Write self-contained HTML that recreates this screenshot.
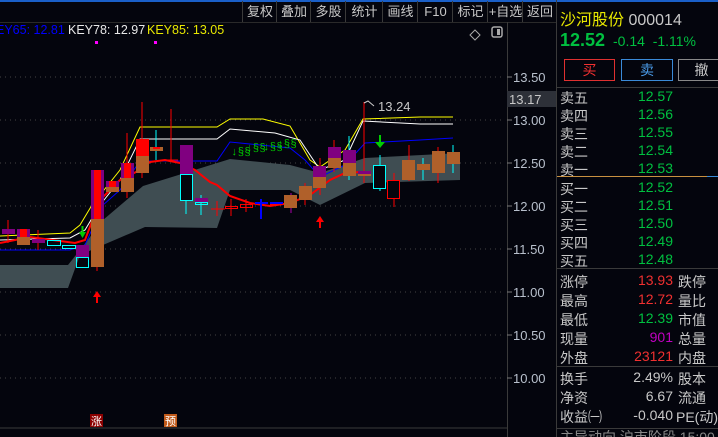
<!DOCTYPE html>
<html style="overflow:hidden;height:437px"><head><meta charset="utf-8"><style>
body{margin:0;width:718px;height:437px;background:#04050d;overflow:hidden;font-family:"Liberation Sans","Noto Sans CJK SC",sans-serif;position:relative}
.a{position:absolute;white-space:nowrap}
.btn{position:absolute;top:1px;height:21px;line-height:21px;color:#c8c8c8;font-size:13px;text-align:center;border-left:1px solid #3a3a3a}
.r{position:absolute;left:560px;font-size:14px;color:#c8c8c8}
.v{position:absolute;font-size:14px;text-align:right;width:80px}
</style></head><body>
<div class="a" style="left:0;top:0;width:718px;height:2px;background:#1a5fc8"></div>
<div class="btn" style="left:242px;width:34px">复权</div>
<div class="btn" style="left:276px;width:34px">叠加</div>
<div class="btn" style="left:310px;width:35px">多股</div>
<div class="btn" style="left:345px;width:37px">统计</div>
<div class="btn" style="left:382px;width:35px">画线</div>
<div class="btn" style="left:417px;width:35px">F10</div>
<div class="btn" style="left:452px;width:35px">标记</div>
<div class="btn" style="left:487px;width:35px">+自选</div>
<div class="btn" style="left:522px;width:34px">返回</div>
<div class="a" style="left:0;top:22px;width:556px;height:1px;background:#2a2a2a"></div>
<div class="a" style="left:556px;top:0;width:1px;height:437px;background:#3a3a3a"></div>
<div class="a" style="left:507px;top:22px;width:1px;height:415px;background:#3a3a3a"></div>
<div class="a" style="left:-4px;top:23px;font-size:12.5px;color:#0000ff">EY65: 12.81</div>
<div class="a" style="left:68px;top:23px;font-size:12.5px;color:#e8e8e8">KEY78: 12.97</div>
<div class="a" style="left:147px;top:23px;font-size:12.5px;color:#e8e800">KEY85: 13.05</div>
<div class="a" style="left:95px;top:41px;width:3px;height:3px;background:#f0f"></div>
<div class="a" style="left:154px;top:41px;width:3px;height:3px;background:#f0f"></div>
<svg class="a" style="left:0;top:0" width="556" height="437">
<g stroke="#444" stroke-dasharray="1,4">
<line x1="0" y1="77" x2="505" y2="77"/><line x1="0" y1="120" x2="505" y2="120"/><line x1="0" y1="163" x2="505" y2="163"/><line x1="0" y1="206" x2="505" y2="206"/><line x1="0" y1="249" x2="505" y2="249"/><line x1="0" y1="292" x2="505" y2="292"/><line x1="0" y1="335" x2="505" y2="335"/><line x1="0" y1="378" x2="505" y2="378"/></g>
<g stroke="#777"><line x1="507" y1="77" x2="512" y2="77"/><line x1="507" y1="120" x2="512" y2="120"/><line x1="507" y1="163" x2="512" y2="163"/><line x1="507" y1="206" x2="512" y2="206"/><line x1="507" y1="249" x2="512" y2="249"/><line x1="507" y1="292" x2="512" y2="292"/><line x1="507" y1="335" x2="512" y2="335"/><line x1="507" y1="378" x2="512" y2="378"/></g>
<line x1="0" y1="428" x2="507" y2="428" stroke="#3a3a3a"/>
<g font-size="13" fill="#b8c0cc" font-family="Liberation Sans"><text x="513" y="82">13.50</text><text x="513" y="125">13.00</text><text x="513" y="168">12.50</text><text x="513" y="211">12.00</text><text x="513" y="254">11.50</text><text x="513" y="297">11.00</text><text x="513" y="340">10.50</text><text x="513" y="383">10.00</text></g>
<rect x="507" y="91" width="49" height="16" fill="#2d3038"/><text x="509" y="104" font-size="13" fill="#c8c8c8">13.17</text>
<path d="M475 30 l5 5 -5 5 -5 -5z" fill="none" stroke="#aaa"/><rect x="492" y="27" width="10" height="10" rx="2" fill="none" stroke="#aaa" stroke-width="1.5"/><rect x="497" y="29" width="3" height="6" fill="#aaa"/>
<polygon fill="#3f4d52" points="0,265 68,265 80,250 103,220 143,186 230,159 290,165 320,173 365,158 460,153 460,180 365,183 320,205 290,190 230,190 217,228 145,227 103,245 80,255 68,288 0,288"/>
<polyline fill="none" stroke="#ffff00" points="0,236 70,233 80,225 92,205 120,170 140,127 217,127 230,119 263,119 290,126 310,160 320,167 345,150 363,119 420,117 453,117"/>
<polyline fill="none" stroke="#fff" points="0,240 70,238 85,230 100,205 120,180 140,139 217,139 230,129 275,133 300,140 320,170 345,160 363,121 420,124 453,124"/>
<polyline fill="none" stroke="#0000ff" points="0,250 70,250 85,245 103,205 120,190 140,161 217,161 230,142 290,148 305,160 320,177 345,165 365,143 420,140 453,138"/>
<polyline fill="none" stroke="#ff0000" stroke-width="2" points="0,243 30,237 60,241 75,243 85,240 100,200 120,180 140,170 150,162 165,160 180,163 195,170 210,182 217,185 230,196 250,203 270,206 290,203 310,195 330,180 345,173 360,172"/>
<g stroke-width="1">
<line x1="8" y1="220" x2="8" y2="243" stroke="#f00"/><rect x="2" y="229" width="13" height="5" fill="#800080"/>
<rect x="17" y="229" width="13" height="8" fill="#800080"/><rect x="17" y="237" width="13" height="8" fill="#b0602a"/><rect x="20" y="229" width="7" height="8" fill="#f00"/>
<line x1="38" y1="230" x2="38" y2="250" stroke="#f00"/><rect x="32" y="239" width="13" height="4" fill="#800080"/>
<rect x="47.5" y="240.5" width="13" height="5" fill="none" stroke="#0ff"/>
<rect x="62.5" y="245.5" width="13" height="3" fill="none" stroke="#0ff"/>
<rect x="76" y="245" width="13" height="12" fill="#800080"/><rect x="76.5" y="257.5" width="12" height="10" fill="none" stroke="#0ff"/>
<polygon points="79,232 86,232 82.5,238" fill="#0c0"/><line x1="82.5" y1="226" x2="82.5" y2="233" stroke="#0c0" stroke-width="2"/>
<line x1="97" y1="170" x2="97" y2="271" stroke="#f00"/><rect x="91" y="170" width="13" height="49" fill="#800080"/><rect x="94" y="170" width="7" height="49" fill="#f00"/><rect x="91" y="219" width="13" height="48" fill="#b0602a"/>
<rect x="106" y="181" width="13" height="6" fill="#800080"/><rect x="109" y="181" width="7" height="6" fill="#f00"/><rect x="106" y="187" width="13" height="5" fill="#b0602a"/>
<line x1="127" y1="133" x2="127" y2="198" stroke="#f00"/><rect x="121" y="163" width="13" height="15" fill="#800080"/><rect x="124" y="163" width="7" height="15" fill="#f00"/><rect x="121" y="178" width="13" height="14" fill="#b0602a"/>
<line x1="142" y1="102" x2="142" y2="178" stroke="#f00"/><rect x="136" y="139" width="13" height="17" fill="#f00"/><rect x="136" y="156" width="13" height="17" fill="#b0602a"/>
<line x1="156" y1="130" x2="156" y2="160" stroke="#0ff"/><rect x="150" y="147" width="13" height="4" fill="#b0602a"/><rect x="153" y="147" width="7" height="2" fill="#f00"/>
<line x1="171" y1="109" x2="171" y2="160" stroke="#f00"/><line x1="165" y1="160" x2="178" y2="160" stroke="#f00"/>
<line x1="186" y1="145" x2="186" y2="214" stroke="#0ff"/><rect x="180" y="145" width="13" height="29" fill="#800080"/><rect x="180.5" y="174.5" width="12" height="26" fill="#04050d" stroke="#0ff"/>
<line x1="201" y1="195" x2="201" y2="215" stroke="#0ff"/><rect x="195" y="198" width="13" height="4" fill="#800080"/><rect x="195.5" y="202.5" width="12" height="2" fill="none" stroke="#0ff"/>
<line x1="217" y1="201" x2="217" y2="216" stroke="#f00"/><line x1="211" y1="209" x2="225" y2="209" stroke="#f00"/>
<line x1="231" y1="199" x2="231" y2="216" stroke="#f00"/><rect x="225.5" y="206.5" width="12" height="2" fill="none" stroke="#f00"/>
<line x1="246" y1="199" x2="246" y2="212" stroke="#f00"/><rect x="240.5" y="204.5" width="12" height="3" fill="none" stroke="#f00"/>
<line x1="261" y1="199" x2="261" y2="219" stroke="#00f" stroke-width="2"/><line x1="255" y1="203" x2="268" y2="203" stroke="#00f" stroke-width="2"/>
<rect x="270" y="202" width="13" height="3" fill="#00f"/><rect x="270" y="204" width="13" height="1" fill="#f00"/>
<line x1="291" y1="193" x2="291" y2="213" stroke="#a0a"/><rect x="284" y="195" width="13" height="13" fill="#b0602a"/>
<line x1="305" y1="183" x2="305" y2="205" stroke="#f00"/><rect x="299" y="186" width="13" height="14" fill="#b0602a"/>
<line x1="320" y1="158" x2="320" y2="195" stroke="#f00"/><rect x="313" y="166" width="13" height="11" fill="#800080"/><rect x="313" y="177" width="13" height="11" fill="#b0602a"/>
<line x1="334" y1="140" x2="334" y2="172" stroke="#f00"/><rect x="328" y="147" width="13" height="11" fill="#800080"/><rect x="328" y="158" width="13" height="10" fill="#b0602a"/>
<line x1="349" y1="136" x2="349" y2="180" stroke="#0ff"/><rect x="343" y="150" width="13" height="13" fill="#800080"/><rect x="343" y="163" width="13" height="13" fill="#b0602a"/>
<line x1="364" y1="102" x2="364" y2="183" stroke="#f00"/><rect x="358" y="171" width="13" height="3" fill="#800080"/><rect x="358" y="174" width="13" height="2" fill="#b0602a"/>
<line x1="380" y1="155" x2="380" y2="191" stroke="#0ff"/><rect x="373.5" y="165.5" width="12" height="23" fill="#04050d" stroke="#0ff"/>
<line x1="394" y1="173" x2="394" y2="207" stroke="#f00"/><rect x="387.5" y="180.5" width="12" height="18" fill="#04050d" stroke="#f00"/>
<line x1="409" y1="145" x2="409" y2="181" stroke="#f00"/><rect x="402" y="160" width="13" height="20" fill="#b0602a"/>
<line x1="423" y1="158" x2="423" y2="180" stroke="#0ff"/><rect x="417" y="164" width="13" height="6" fill="#b0602a"/>
<line x1="438" y1="147" x2="438" y2="183" stroke="#f00"/><rect x="432" y="151" width="13" height="22" fill="#b0602a"/>
<line x1="453" y1="145" x2="453" y2="173" stroke="#0ff"/><rect x="447" y="152" width="13" height="12" fill="#b0602a"/>
</g>
<polyline points="364,103 368,101 374,106" fill="none" stroke="#ccc"/><text x="378" y="111" font-size="13" fill="#c8c8c8">13.24</text>
<g fill="#0c0"><rect x="379" y="135" width="2" height="7"/><polygon points="375,142 385,142 380,148"/></g>
<g fill="#f00"><polygon points="93,297 101,297 97,291"/><rect x="96" y="297" width="2" height="6"/><polygon points="316,222 324,222 320,216"/><rect x="319" y="222" width="2" height="6"/></g>
<g fill="#0c0" font-size="11" font-family="Liberation Mono"><text x="231" y="155">↓§§</text><text x="246" y="151">↓§§</text><text x="263" y="150">↓§§</text><text x="277" y="147">↓§§</text></g>
<rect x="90" y="414" width="13" height="13" fill="#8b0000"/><text x="91" y="425" font-size="11" fill="#fff" font-family="Noto Sans CJK SC">涨</text>
<rect x="164" y="414" width="13" height="13" fill="#c05a1a"/><text x="165" y="425" font-size="11" fill="#fff" font-family="Noto Sans CJK SC">预</text>
</svg>
<div class="a" style="left:560px;top:6px;font-size:16px;color:#e8e800">沙河股份 <span style="color:#c8c8c8">000014</span></div>
<div class="a" style="left:560px;top:30px;font-size:18px;font-weight:bold;color:#00c040">12.52</div>
<div class="a" style="left:613px;top:33px;font-size:14px;color:#00c040">-0.14 &nbsp;-1.11%</div>
<div class="a" style="left:564px;top:59px;width:49px;height:20px;border:1px solid #e03030;color:#f03030;text-align:center;line-height:20px;font-size:14px">买</div>
<div class="a" style="left:621px;top:59px;width:50px;height:20px;border:1px solid #3a8ad8;color:#4a9ae8;text-align:center;line-height:20px;font-size:14px">卖</div>
<div class="a" style="left:678px;top:59px;width:45px;height:20px;border:1px solid #888;color:#c8c8c8;text-align:center;line-height:20px;font-size:14px">撤</div>
<div class="a" style="left:557px;top:87px;width:161px;height:1px;background:#3a3a3a"></div>
<div class="a" style="left:557px;top:176px;width:150px;height:1px;background:#c89040"></div><div class="a" style="left:707px;top:176px;width:11px;height:1px;background:#3a8ad8"></div>
<div class="a" style="left:557px;top:268px;width:161px;height:1px;background:#3a3a3a"></div>
<div class="a" style="left:557px;top:366px;width:161px;height:1px;background:#3a3a3a"></div>
<div class="r" style="top:88px">卖五</div><div class="v" style="left:593px;top:88px;color:#00c040">12.57</div>
<div class="r" style="top:106px">卖四</div><div class="v" style="left:593px;top:106px;color:#00c040">12.56</div>
<div class="r" style="top:124px">卖三</div><div class="v" style="left:593px;top:124px;color:#00c040">12.55</div>
<div class="r" style="top:142px">卖二</div><div class="v" style="left:593px;top:142px;color:#00c040">12.54</div>
<div class="r" style="top:160px">卖一</div><div class="v" style="left:593px;top:160px;color:#00c040">12.53</div>
<div class="r" style="top:179px">买一</div><div class="v" style="left:593px;top:179px;color:#00c040">12.52</div>
<div class="r" style="top:197px">买二</div><div class="v" style="left:593px;top:197px;color:#00c040">12.51</div>
<div class="r" style="top:215px">买三</div><div class="v" style="left:593px;top:215px;color:#00c040">12.50</div>
<div class="r" style="top:233px">买四</div><div class="v" style="left:593px;top:233px;color:#00c040">12.49</div>
<div class="r" style="top:251px">买五</div><div class="v" style="left:593px;top:251px;color:#00c040">12.48</div>
<div class="r" style="top:272px">涨停</div><div class="v" style="left:593px;top:272px;color:#f03030">13.93</div><div class="r" style="left:678px;top:272px">跌停</div>
<div class="r" style="top:291px">最高</div><div class="v" style="left:593px;top:291px;color:#f03030">12.72</div><div class="r" style="left:678px;top:291px">量比</div>
<div class="r" style="top:310px">最低</div><div class="v" style="left:593px;top:310px;color:#00c040">12.39</div><div class="r" style="left:678px;top:310px">市值</div>
<div class="r" style="top:329px">现量</div><div class="v" style="left:593px;top:329px;color:#c000c0">901</div><div class="r" style="left:678px;top:329px">总量</div>
<div class="r" style="top:348px">外盘</div><div class="v" style="left:593px;top:348px;color:#f03030">23121</div><div class="r" style="left:678px;top:348px">内盘</div>
<div class="r" style="top:369px">换手</div><div class="v" style="left:593px;top:369px;color:#c8c8c8">2.49%</div><div class="r" style="left:678px;top:369px">股本</div>
<div class="r" style="top:388px">净资</div><div class="v" style="left:593px;top:388px;color:#c8c8c8">6.67</div><div class="r" style="left:678px;top:388px">流通</div>
<div class="r" style="top:407px">收益㈠</div><div class="v" style="left:593px;top:407px;color:#c8c8c8">-0.040</div><div class="r" style="left:676px;top:407px">PE(动)</div>
<div class="a" style="left:557px;top:428px;width:161px;height:1px;background:#3a3a3a"></div>
<div class="a" style="left:560px;top:430px;width:158px;height:7px;overflow:hidden;font-size:14px;color:#888;line-height:14px">主导动向 沪市阶段 15:00</div>
</body></html>
